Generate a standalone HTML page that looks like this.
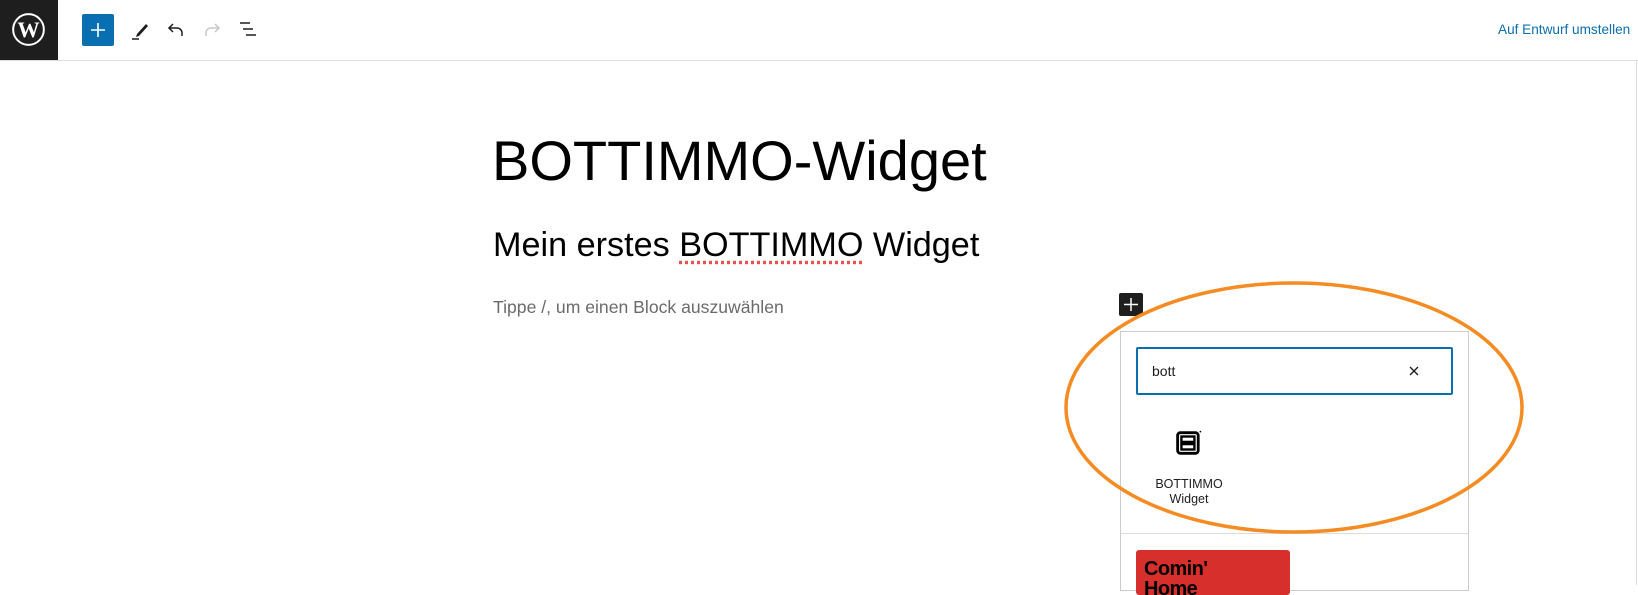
<!DOCTYPE html>
<html><head><meta charset="utf-8"><style>
*{margin:0;padding:0;box-sizing:border-box}
body{width:1638px;height:585px;overflow:hidden;background:#fff;font-family:"Liberation Sans",Arial,sans-serif;position:relative;color:#1e1e1e}
.abs{position:absolute}
</style></head><body>
<div class="abs" style="left:0;top:0;width:1638px;height:61px;border-bottom:1px solid #ddd;background:#fff"></div>
<div class="abs" style="left:0;top:0;width:58px;height:60px;background:#1e1e1e"></div>
<svg class="abs" style="left:12px;top:13px" width="33" height="33" viewBox="0 0 20 20"><circle cx="10" cy="10" r="9.3" fill="none" stroke="#fff" stroke-width="1.2"/><text x="10" y="14.6" text-anchor="middle" font-family="Liberation Serif,serif" font-weight="bold" font-size="13.5" fill="#fff">W</text></svg>
<div class="abs" style="left:82px;top:14px;width:32px;height:32px;background:#0a6fb0;border-radius:2px"></div>
<svg class="abs" style="left:82px;top:14px" width="32" height="32"><path d="M16 9v14M9 16h14" stroke="#fff" stroke-width="1.6"/></svg>
<svg class="abs" style="left:128px;top:18px" width="24" height="24" viewBox="0 0 24 24"><path d="M9 16l9-10 2 2-9 10-3 1z" fill="#1e1e1e"/><path d="M4 21h7" stroke="#1e1e1e" stroke-width="1.5"/></svg>
<svg class="abs" style="left:164px;top:18px" width="24" height="24" viewBox="0 0 24 24"><path d="M18 18v-3a5 5 0 0 0-5-5H6M9 6l-4 4 4 4" fill="none" stroke="#1e1e1e" stroke-width="1.5"/></svg>
<svg class="abs" style="left:200px;top:18px" width="24" height="24" viewBox="0 0 24 24"><path d="M6 18v-3a5 5 0 0 1 5-5h7M15 6l4 4-4 4" fill="none" stroke="#c8c8c8" stroke-width="1.5"/></svg>
<svg class="abs" style="left:237px;top:18px" width="24" height="24" viewBox="0 0 24 24"><path d="M3 5h10M6 11h10M9 17h10" stroke="#1e1e1e" stroke-width="1.5"/></svg>
<div class="abs" style="left:1498px;top:22px;font-size:13.6px;color:#0a6fb0;white-space:nowrap">Auf Entwurf umstellen</div>
<div class="abs" style="left:1636px;top:61px;width:1px;height:524px;background:#ddd"></div>

<div class="abs" style="left:492px;top:126px;font-size:56px;line-height:70px;color:#000;white-space:nowrap">BOTTIMMO-Widget</div>
<div class="abs" style="left:493px;top:225px;font-size:34.2px;line-height:40px;color:#000;white-space:nowrap">Mein erstes <span style="text-decoration:underline dotted #e25555;text-underline-offset:5px">BOTTIMMO</span> Widget</div>
<div class="abs" style="left:493px;top:297px;font-size:17.6px;line-height:20px;color:#6b6b6b;white-space:nowrap">Tippe /, um einen Block auszuwählen</div>

<div class="abs" style="left:1119px;top:293px;width:24px;height:23px;background:#1e1e1e;border-radius:2px"></div>
<svg class="abs" style="left:1119px;top:293px" width="24" height="23"><path d="M12 5v13M5 11.5h14" stroke="#fff" stroke-width="1.5"/></svg>
<div class="abs" style="left:1120px;top:331px;width:349px;height:260px;border:1px solid #ccc;background:#fff"></div>
<div class="abs" style="left:1136px;top:347px;width:317px;height:48px;border:2px solid #0a6fb0;border-radius:2px"></div>
<div class="abs" style="left:1152px;top:363px;font-size:14px;color:#1e1e1e">bott</div>
<svg class="abs" style="left:1407px;top:364px" width="14" height="14"><path d="M3 3l8 8M11 3l-8 8" stroke="#1e1e1e" stroke-width="1.4"/></svg>
<svg class="abs" style="left:1176px;top:430px" width="26" height="26" viewBox="0 0 24 24"><rect x="1.5" y="2.5" width="19" height="19" rx="2.5" fill="none" stroke="#000" stroke-width="2.6"/><rect x="5" y="6" width="12" height="5" fill="none" stroke="#000" stroke-width="2.2"/><rect x="5" y="13" width="12" height="5" fill="none" stroke="#000" stroke-width="2.2"/><circle cx="22.5" cy="1.5" r="0.8" fill="#000"/></svg>
<div class="abs" style="left:1139px;top:477px;width:100px;text-align:center;font-size:12.5px;line-height:15px;color:#1e1e1e">BOTTIMMO<br>Widget</div>
<div class="abs" style="left:1121px;top:533px;width:347px;height:1px;background:#ddd"></div>
<div class="abs" style="left:1136px;top:550px;width:154px;height:45px;background:#d7302c;border-radius:3px;overflow:hidden"><div style="padding:9px 0 0 8px;font-size:20px;font-weight:bold;line-height:20px;color:#000;letter-spacing:-0.6px">Comin'<br>Home</div></div>

<svg class="abs" style="left:0;top:0" width="1638" height="585"><ellipse cx="1294" cy="407.5" rx="228" ry="124.5" fill="none" stroke="#f58b23" stroke-width="3.5"/></svg>
</body></html>
